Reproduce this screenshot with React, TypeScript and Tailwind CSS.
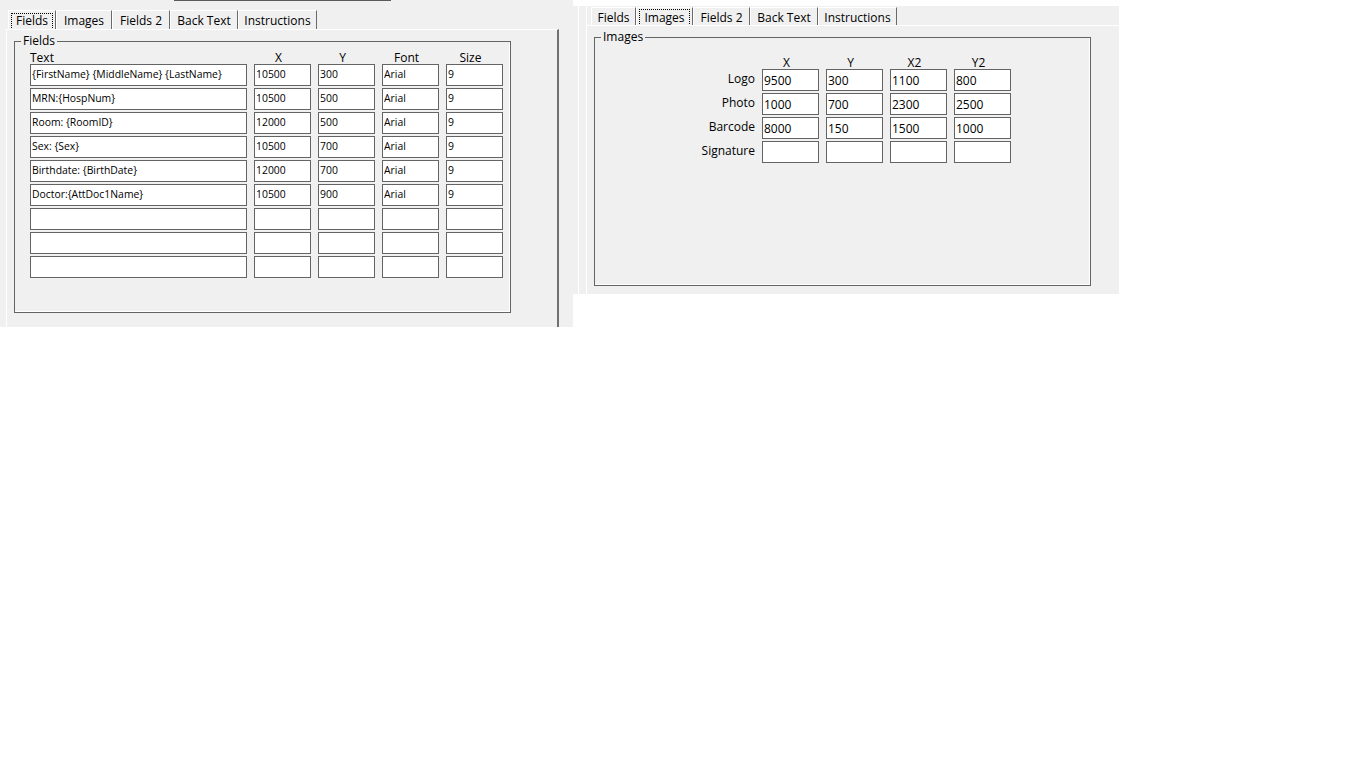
const font = "font-['Open_Sans',sans-serif]";

const tabNames = ["Fields", "Images", "Fields 2", "Back Text", "Instructions"];

const fieldRows = [
  ["{FirstName} {MiddleName} {LastName}", "10500", "300", "Arial", "9"],
  ["MRN:{HospNum}", "10500", "500", "Arial", "9"],
  ["Room: {RoomID}", "12000", "500", "Arial", "9"],
  ["Sex: {Sex}", "10500", "700", "Arial", "9"],
  ["Birthdate: {BirthDate}", "12000", "700", "Arial", "9"],
  ["Doctor:{AttDoc1Name}", "10500", "900", "Arial", "9"],
  ["", "", "", "", ""],
  ["", "", "", "", ""],
  ["", "", "", "", ""],
];

const imageRows = [
  { label: "Logo", values: ["9500", "300", "1100", "800"] },
  { label: "Photo", values: ["1000", "700", "2300", "2500"] },
  { label: "Barcode", values: ["8000", "150", "1500", "1000"] },
  { label: "Signature", values: ["", "", "", ""] },
];

type TabStripProps = { selected: number; widths: number[] };

const TabStrip = ({ selected, widths }: TabStripProps) => (
  <>
    {tabNames.map((name, i) => (
      <div
        key={name}
        style={{ width: widths[i] }}
        className="h-full shrink-0 flex items-center justify-center pt-[2px] border-t border-l border-white border-r border-r-[#6a6a6a] text-[12px] text-black"
      >
        {i === selected ? (
          <span className="h-[17px] flex items-center px-[4px] border border-dotted border-black leading-none">
            {name}
          </span>
        ) : (
          <span className="leading-none">{name}</span>
        )}
      </div>
    ))}
  </>
);

const Box = ({ value, className }: { value: string; className: string }) => (
  <input
    readOnly
    value={value}
    className={`h-[22px] w-full bg-white border border-[#646464] px-[1px] text-black outline-none ${className}`}
  />
);

const FieldsWindow = () => (
  <div className={`w-[573px] h-[327px] shrink-0 bg-[#f0f0f0] flex flex-col overflow-hidden ${font}`}>
    <div className="ml-[174px] w-[217px] h-px bg-[#5a5a5a] shrink-0" />
    <div className="flex pl-[8px] mt-[9px] h-[19px] shrink-0">
      <TabStrip selected={0} widths={[48, 56, 58, 68, 79]} />
    </div>
    <div className="ml-[6px] w-[553px] flex-1 border-l border-t border-white border-r-2 border-r-[#707070]">
      <fieldset className="ml-[7px] mt-[3px] w-[497px] h-[280px] border border-[#646464] shadow-[inset_-1px_-1px_0_#fff]">
        <legend className="ml-[6px] px-[2px] text-[12px] leading-[16px] text-black">Fields</legend>
        <div className="pl-[15px] pt-[1px]">
          <div className="grid grid-cols-[217px_57px_57px_57px_57px] gap-x-[7px] h-[14px] text-[12px] leading-[15px] text-black">
            <span>Text</span>
            <span className="text-center pr-[8px]">X</span>
            <span className="text-center pr-[8px]">Y</span>
            <span className="text-center pr-[8px]">Font</span>
            <span className="text-center pr-[8px]">Size</span>
          </div>
          <div className="grid grid-cols-[217px_57px_57px_57px_57px] gap-x-[7px] gap-y-[2px]">
            {fieldRows.map((row, r) =>
              row.map((v, c) => <Box key={`${r}-${c}`} value={v} className="text-[10.4px] pb-[2px]" />)
            )}
          </div>
        </div>
      </fieldset>
    </div>
  </div>
);

const ImagesWindow = () => (
  <div className={`w-[546px] shrink-0 flex flex-col ${font}`}>
    <div className="h-[6px]" />
    <div className="h-[288px] bg-[#f0f0f0] flex">
      <div className="w-[5px]" />
      <div className="w-px bg-white" />
      <div className="w-[7px]" />
      <div className="flex-1 flex flex-col border-l border-white">
        <div className="flex pl-[4px] mt-[1px] h-[18px] shrink-0">
          <TabStrip selected={1} widths={[45, 57, 57, 68, 79]} />
        </div>
        <div className="flex-1 border-t border-white">
          <fieldset className="ml-[7px] mt-[3px] w-[497px] h-[257px] border border-[#646464] shadow-[inset_-1px_-1px_0_#fff]">
            <legend className="ml-[6px] px-[2px] text-[12px] leading-[16px] text-black">Images</legend>
            <div className="pl-[95px] pt-[10px]">
              <div className="grid grid-cols-[65px_57px_57px_57px_57px] gap-x-[7px] h-[14px] text-[12px] leading-[15px] text-black">
                <span />
                <span className="text-center pr-[8px]">X</span>
                <span className="text-center pr-[8px]">Y</span>
                <span className="text-center pr-[8px]">X2</span>
                <span className="text-center pr-[8px]">Y2</span>
              </div>
              <div className="grid grid-cols-[65px_57px_57px_57px_57px] gap-x-[7px] gap-y-[2px]">
                {imageRows.map((row) => (
                  <div key={row.label} className="contents">
                    <span className="text-right text-[12px] leading-[20px] text-black">{row.label}</span>
                    {row.values.map((v, c) => (
                      <Box key={c} value={v} className="text-[12px]" />
                    ))}
                  </div>
                ))}
              </div>
            </div>
          </fieldset>
        </div>
      </div>
    </div>
  </div>
);

export default function App() {
  return (
    <div className="w-[1366px] h-[768px] bg-white flex items-start">
      <FieldsWindow />
      <ImagesWindow />
    </div>
  );
}
